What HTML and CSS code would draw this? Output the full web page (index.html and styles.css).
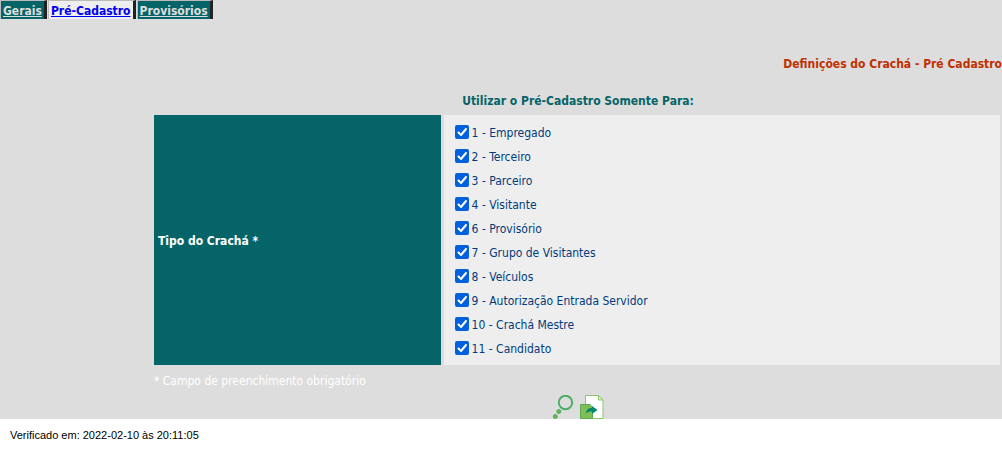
FILE: index.html
```html
<!DOCTYPE html>
<html lang="pt-BR">
<head>
<meta charset="utf-8">
<title>Definições do Crachá - Pré Cadastro</title>
<link rel="stylesheet" href="styles.css">
</head>
<body>
<div class="panel">
  <nav class="tabs">
    <a class="tab" href="#gerais">Gerais</a>
    <a class="tab tab-active" href="#pre-cadastro">Pré-Cadastro</a>
    <a class="tab" href="#provisorios">Provisórios</a>
  </nav>
  <h1 class="page-title">Definições do Crachá - Pré Cadastro</h1>
  <form class="content">
    <h2 class="section-title">Utilizar o Pré-Cadastro Somente Para:</h2>
    <div class="row" role="group" aria-labelledby="tipo">
      <div class="row-label" id="tipo">Tipo do Crachá *</div>
      <div class="options">
        <label class="option"><input class="check" type="checkbox" checked>1 - Empregado</label>
        <label class="option"><input class="check" type="checkbox" checked>2 - Terceiro</label>
        <label class="option"><input class="check" type="checkbox" checked>3 - Parceiro</label>
        <label class="option"><input class="check" type="checkbox" checked>4 - Visitante</label>
        <label class="option"><input class="check" type="checkbox" checked>6 - Provisório</label>
        <label class="option"><input class="check" type="checkbox" checked>7 - Grupo de Visitantes</label>
        <label class="option"><input class="check" type="checkbox" checked>8 - Veículos</label>
        <label class="option"><input class="check" type="checkbox" checked>9 - Autorização Entrada Servidor</label>
        <label class="option"><input class="check" type="checkbox" checked>10 - Crachá Mestre</label>
        <label class="option"><input class="check" type="checkbox" checked>11 - Candidato</label>
      </div>
    </div>
    <p class="note">* Campo de preenchimento obrigatório</p>
    <div class="actions">
      <button class="action" type="button" aria-label="Pesquisar">
        <svg width="24" height="24" viewBox="0 0 24 24">
          <circle cx="13.500" cy="7.500" r="6.700" fill="none" stroke="#4bae62" stroke-width="2"/>
          <circle cx="6.800" cy="16.500" r="2" fill="#6ab54f" stroke="#4bae62"/>
          <circle cx="3.300" cy="21.500" r="2" fill="#6ab54f" stroke="#4bae62"/>
        </svg>
      </button>
      <button class="action" type="button" aria-label="Salvar">
        <svg width="24" height="24" viewBox="0 0 24 24">
          <path d="M5.500.5h13l4.500 4.500V23.500H5.500z" fill="#fff" stroke="#8cc665"/>
          <path d="M18.500.5v4.500H23z" fill="#e4f1da" stroke="#8cc665"/>
          <path d="M.5 9.500H10l2.500 3V23.500H.5z" fill="#80bd57" stroke="#5cac50"/>
          <path d="M6 18.500c0-3.500 2-5.500 6-5.500v-2l5.500 4-5.500 4v-2.500c-3 0-4.500.5-6 2z" fill="#05896b"/>
        </svg>
      </button>
    </div>
  </form>
</div>
<footer class="footer">Verificado em: 2022-02-10 às 20:11:05</footer>
</body>
</html>
```
FILE: styles.css
```css
body {
  margin: 0;
  background: #fff;
  font: 12px/16px "DejaVu Sans Condensed", Tahoma, sans-serif;
}

.panel {
  background: #ddd;
}

.tabs {
  display: flex;
  gap: 1px;
}

.tab {
  padding: 3px 2px 0;
  border: solid #bbb;
  border-width: 1px 3px 0 1px;
  border-right-color: #222;
  background: #056467;
  color: #ddd;
  font-weight: bold;
  line-height: 15px;
}

.tab-active {
  background: #eee;
  color: #00e;
}

.page-title {
  margin: 36px 0 0;
  color: #c03000;
  font-size: 12px;
  line-height: 18px;
  text-align: right;
}

.content {
  margin-left: 154px;
}

.section-title {
  margin: 0;
  padding: 19px 0 5px;
  color: #056467;
  font-size: 12px;
  line-height: 18px;
  text-align: center;
}

.row {
  display: grid;
  grid-template-columns: 34fr 66fr;
  gap: 3px;
  margin-right: 2px;
}

.row-label {
  display: flex;
  align-items: center;
  padding: 2px 4px 0;
  background: #056467;
  color: #fff;
  font-weight: bold;
}

.options {
  padding: 6px 11px 4px;
  background: #eee;
}

.option {
  display: flex;
  align-items: center;
  gap: 3px;
  color: #003c7d;
  line-height: 24px;
}

.check {
  appearance: none;
  width: 14px;
  height: 14px;
  margin: 0 0 2px;
  border-radius: 2px;
  background: #fff;
}

.check:checked {
  background: #0060df url("data:image/svg+xml,%3Csvg xmlns='http://www.w3.org/2000/svg' viewBox='0 0 14 14'%3E%3Cpath d='M3.500 7.500 6 10l5-6' fill='none' stroke='white' stroke-width='2' stroke-linecap='round' stroke-linejoin='round'/%3E%3C/svg%3E");
}

.note {
  margin: 0;
  padding: 8px 0 6px;
  color: #fff;
}

.actions {
  display: flex;
  justify-content: center;
  gap: 4px;
}

.action {
  display: flex;
  padding: 0;
  border: 0;
  background: none;
}

.footer {
  padding: 8px 10px;
  color: #000;
  font: 11px/16px "Liberation Sans", Arial, sans-serif;
}
```
